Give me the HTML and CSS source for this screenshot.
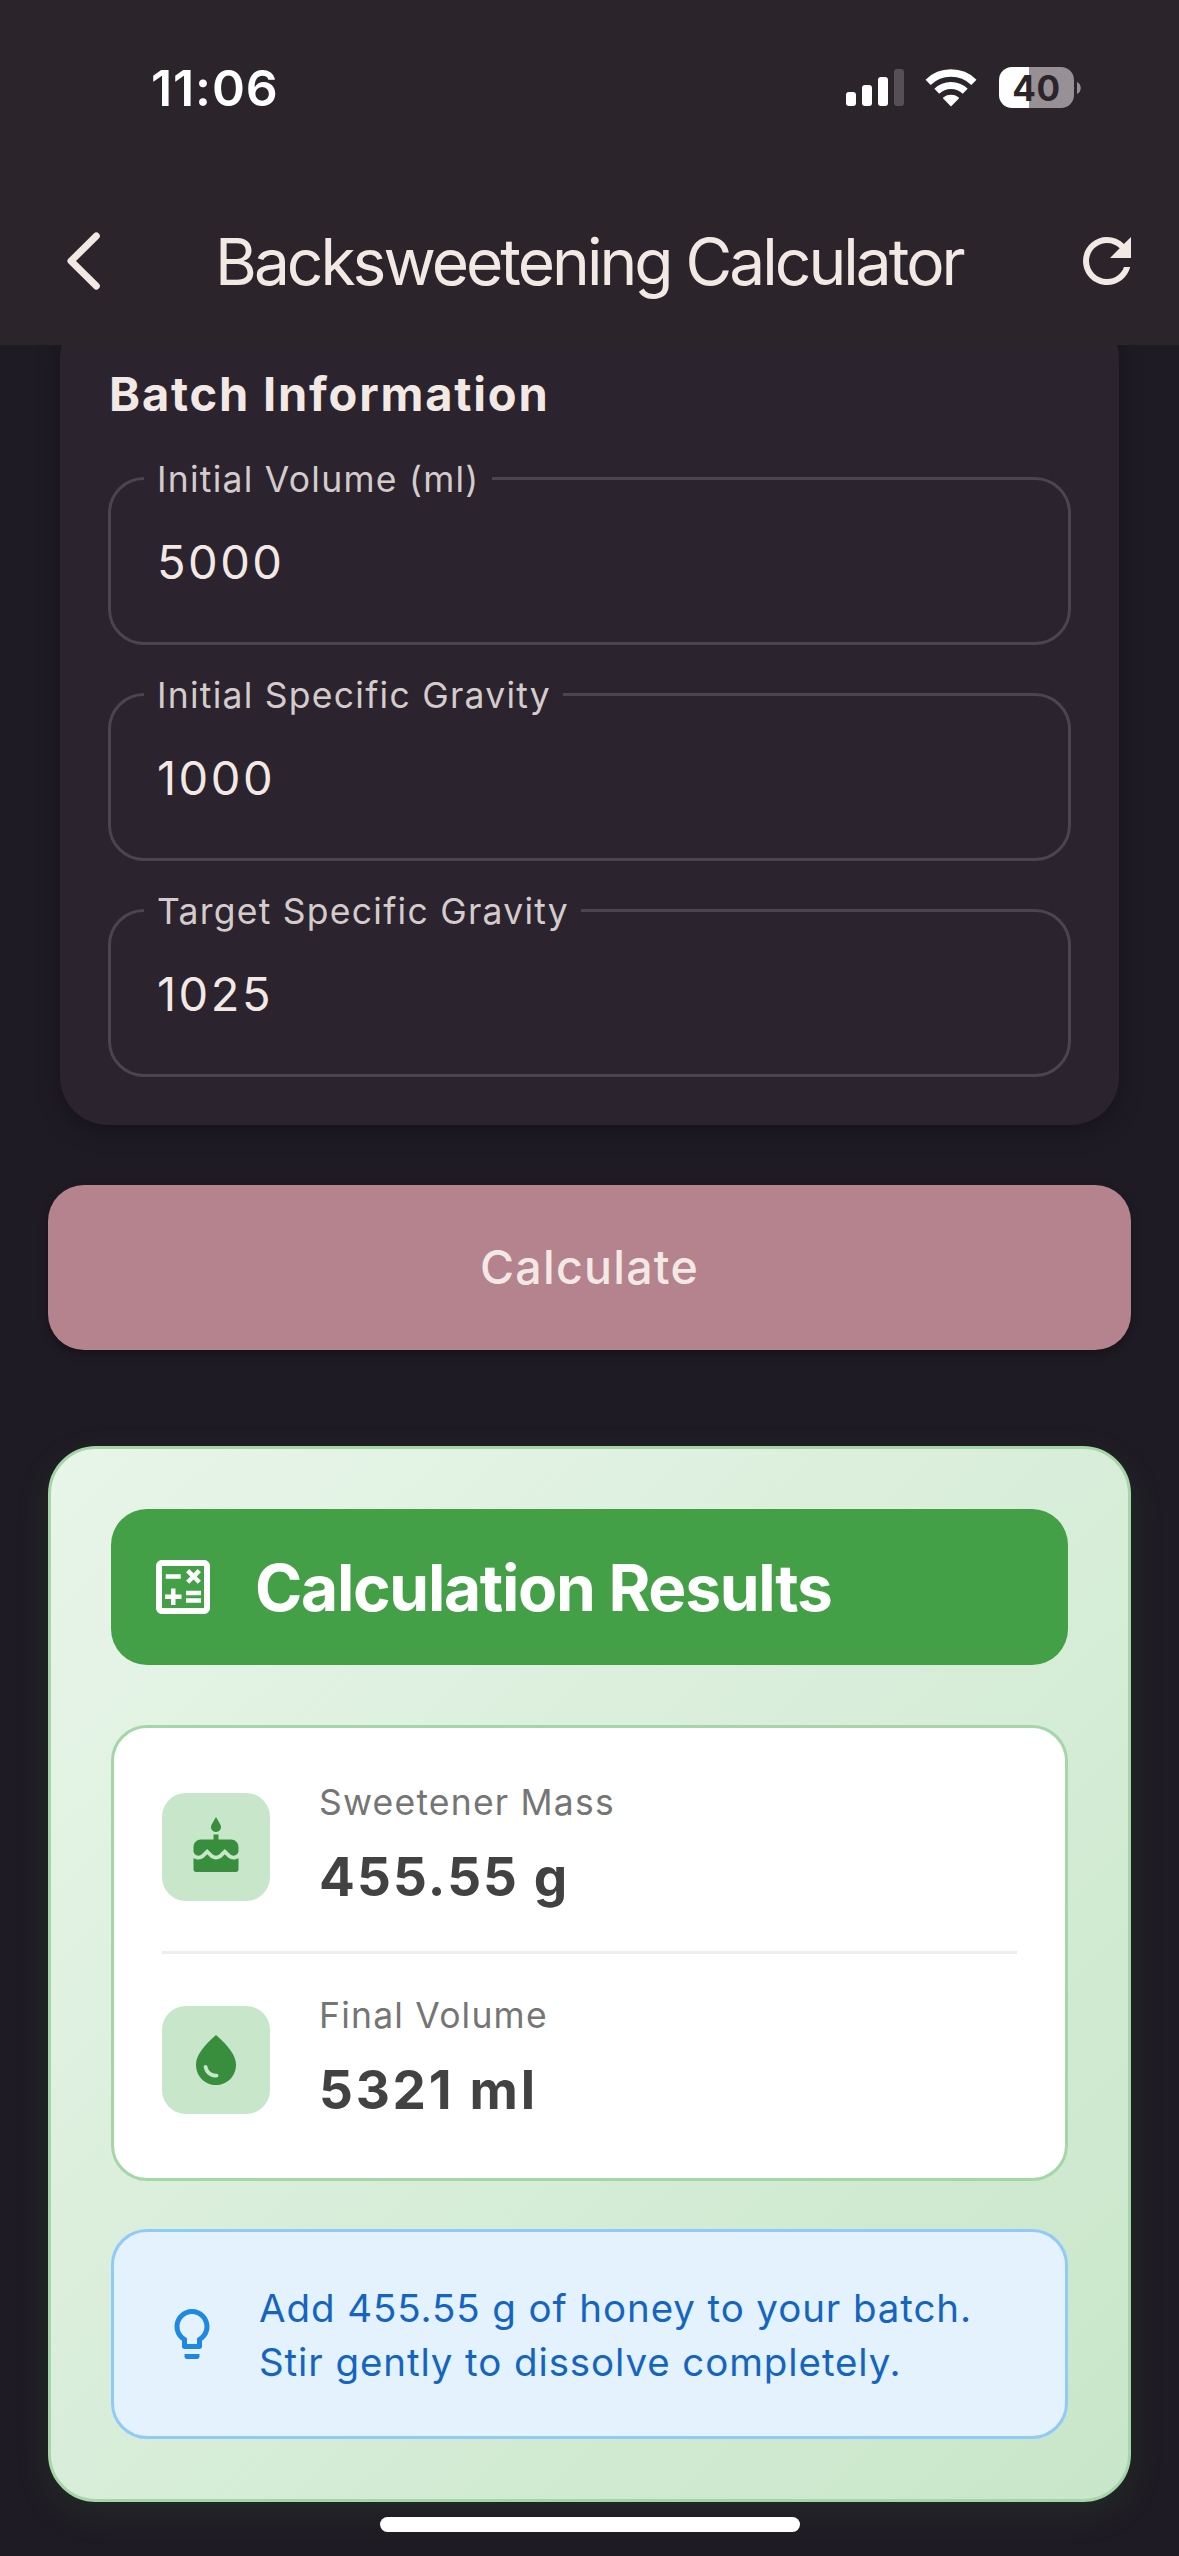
FILE: index.html
```html
<!DOCTYPE html>
<html lang="en">
<head>
<meta charset="utf-8">
<title>Backsweetening Calculator</title>
<link rel="stylesheet" href="styles.css">
</head>
<body>
<header class="top">
  <div class="status">
    <span class="time">11:06</span>
    <div class="indicators">
      <svg class="signal" width="58" height="37" viewBox="0 0 58 37" fill="#fff">
        <rect x="0" y="23" width="10" height="14" rx="3"/>
        <rect x="16" y="16" width="10" height="21" rx="3"/>
        <rect x="32" y="8" width="10" height="29" rx="3"/>
        <rect x="48" y="0" width="10" height="37" rx="3" fill="#565056"/>
      </svg>
      <svg class="wifi" width="52" height="38" viewBox="0 0 52 38" fill="none" stroke="#fff">
        <path d="M3.1 13.3a33 33 0 0 1 45.8 0" stroke-width="7.4"/>
        <path d="M11.8 22.2a20.5 20.5 0 0 1 28.4 0" stroke-width="7"/>
        <path d="M26 37.4l-7.6-7.6a1 1 0 0 1 .1-1.5a12.6 12.6 0 0 1 15 0a1 1 0 0 1 .1 1.5z" fill="#fff" stroke="none"/>
      </svg>
      <div class="battery">40</div>
      <svg class="nub" width="4" height="12" viewBox="0 0 4 12"><path d="M0 0c5 2 5 10 0 12z" fill="#958f95"/></svg>
    </div>
  </div>
  <nav class="appbar">
    <svg width="72" height="72" viewBox="0 0 72 72" fill="none" stroke="#f3e9e4" stroke-width="7" stroke-linecap="round" stroke-linejoin="round"><path d="M48.300 11L23 36l25.300 25"/></svg>
    <h1>Backsweetening Calculator</h1>
    <svg width="72" height="72" viewBox="0 0 24 24" fill="#f3e9e4"><path d="M17.65 6.35A7.958 7.958 0 0 0 12 4c-4.42 0-7.99 3.58-7.99 8s3.57 8 7.99 8c3.73 0 6.84-2.55 7.73-6h-2.08A5.99 5.99 0 0 1 12 18c-3.31 0-6-2.69-6-6s2.69-6 6-6c1.66 0 3.14.69 4.22 1.78L13 11h7V4l-2.35 2.35z"/></svg>
  </nav>
</header>
<main>
  <section class="batch">
    <h2>Batch Information</h2>
    <div class="fields">
      <fieldset><legend>Initial Volume (ml)</legend><div class="value">5000</div></fieldset>
      <fieldset><legend>Initial Specific Gravity</legend><div class="value">1000</div></fieldset>
      <fieldset><legend>Target Specific Gravity</legend><div class="value">1025</div></fieldset>
    </div>
  </section>
  <button class="calculate" type="button">Calculate</button>
  <section class="results">
    <div class="results-head">
      <svg width="72" height="72" viewBox="0 0 24 24" fill="#fff"><path d="M19 3H5c-1.1 0-2 .9-2 2v14c0 1.1.9 2 2 2h14c1.100 0 2-.9 2-2V5c0-1.100-.9-2-2-2zm0 16H5V5h14v14z"/><path d="M6.250 7.720h5v1.500h-5zM13 15.750h5v1.500h-5zM13 13.250h5v1.500h-5zM8 18h1.500v-2h2v-1.500h-2v-2H8v2H6V16h2zM14.090 10.950l1.410-1.410 1.410 1.410 1.060-1.060-1.410-1.420 1.410-1.410L16.910 6 15.500 7.410 14.090 6l-1.060 1.060 1.410 1.410-1.410 1.420z"/></svg>
      <h2>Calculation Results</h2>
    </div>
    <div class="figures">
      <div class="figure">
        <div class="tile"><svg width="60" height="60" viewBox="0 0 24 24" fill="#388e3c"><path d="M12 6c1.110 0 2-.9 2-2 0-.38-.1-.73-.29-1.030L12 0l-1.710 2.970c-.19.3-.29.65-.29 1.030 0 1.100.9 2 2 2zm4.600 9.990l-1.070-1.070-1.080 1.070c-1.300 1.300-3.580 1.310-4.890 0l-1.070-1.070-1.090 1.070C6.750 16.640 5.880 17 4.960 17c-.73 0-1.400-.23-1.960-.61V21c0 .55.45 1 1 1h16c.55 0 1-.45 1-1v-4.610c-.56.38-1.230.61-1.960.61-.92 0-1.790-.36-2.440-1.010zM18 9h-5V7h-2v2H6c-1.660 0-3 1.340-3 3v1.540c0 1.080.88 1.960 1.960 1.960.52 0 1.020-.2 1.380-.57l2.140-2.130 2.130 2.130c.74.74 2.030.74 2.770 0l2.140-2.130 2.130 2.130c.37.37.86.57 1.380.57 1.080 0 1.960-.88 1.960-1.960V12C21 10.340 19.660 9 18 9z"/></svg></div>
        <div class="figure-text"><span class="name">Sweetener Mass</span><span class="amount">455.55 g</span></div>
      </div>
      <hr>
      <div class="figure">
        <div class="tile"><svg width="60" height="60" viewBox="0 0 24 24" fill="#388e3c"><path d="M12 2c-5.330 4.550-8 8.480-8 11.800 0 4.980 3.800 8.200 8 8.200s8-3.220 8-8.200c0-3.320-2.670-7.250-8-11.800zM7.830 14c.37 0 .67.26.74.62.41 2.220 2.280 2.980 3.640 2.870.43-.02.79.32.79.75 0 .4-.32.73-.72.75-2.130.13-4.620-1.090-5.190-4.120C7.010 14.420 7.370 14 7.830 14z"/></svg></div>
        <div class="figure-text"><span class="name">Final Volume</span><span class="amount volume">5321 ml</span></div>
      </div>
    </div>
    <div class="tip">
      <svg width="60" height="60" viewBox="0 0 24 24" fill="#1e88e5"><path d="M9 21c0 .55.45 1 1 1h4c.55 0 1-.45 1-1v-1H9v1zm3-19C8.140 2 5 5.140 5 9c0 2.380 1.190 4.470 3 5.740V17c0 .55.45 1 1 1h6c.55 0 1-.45 1-1v-2.260c1.810-1.270 3-3.360 3-5.740 0-3.860-3.140-7-7-7zm2.850 11.100l-.85.6V16h-4v-2.300l-.85-.6A4.997 4.997 0 0 1 7 9c0-2.760 2.240-5 5-5s5 2.240 5 5c0 1.630-.8 3.160-2.150 4.100z"/></svg>
      <p>Add 455.55 g of honey to your batch. Stir gently to dissolve completely.</p>
    </div>
  </section>
</main>
<div class="home-indicator"></div>
</body>
</html>
```
FILE: styles.css
```css
* { box-sizing: border-box; }
body {
  margin: 0;
  width: 1179px;
  height: 2556px;
  overflow: hidden;
  background: #1f1b24;
  color: #f3e9e4;
  font-family: Inter, "Liberation Sans", sans-serif;
}
h1, h2, p { margin: 0; }
svg { display: block; flex: none; }

.top {
  position: relative;
  z-index: 1;
  height: 345px;
  background: #2b252b;
}
.status {
  display: flex;
  justify-content: space-between;
  height: 177px;
  padding: 58px 98px 0 151px;
}
.time {
  color: #fff;
  font-size: 50px;
  font-weight: 600;
  line-height: 61px;
  letter-spacing: .9px;
}
.indicators {
  display: flex;
  align-items: center;
  height: 59px;
}
.wifi { margin: 0 22px 0 21px; }
.battery {
  width: 75px;
  height: 41px;
  border-radius: 13px;
  background: linear-gradient(90deg, #fff 30px, #979196 30px);
  color: #2b252b;
  font-size: 35px;
  font-weight: 700;
  line-height: 42px;
  letter-spacing: .5px;
  text-align: center;
}
.nub { margin-left: 3px; }
.appbar {
  display: flex;
  align-items: center;
  height: 168px;
  padding: 0 36px 0 48px;
}
.appbar h1 {
  flex: 1;
  margin-left: 95px;
  padding-top: 2px;
  font-size: 64px;
  font-weight: 400;
  line-height: 60px;
  letter-spacing: -2.97px;
  white-space: nowrap;
}

main {
  display: flex;
  flex-direction: column;
  padding: 0 48px;
  margin-top: -35px;
}
.batch {
  margin: 0 12px;
  padding: 48px;
  border-radius: 48px;
  background: #2b232e;
  box-shadow: 0 6px 24px rgba(0, 0, 0, .32);
}
.batch h2 {
  margin: 0 0 31px 1px;
  font-size: 47px;
  font-weight: 700;
  line-height: 71px;
  letter-spacing: 1.8px;
}
.fields { display: flex; flex-direction: column; gap: 31px; }
fieldset {
  min-width: 0;
  height: 185px;
  margin: 0;
  padding: 0 45px 0 33px;
  border: 3px solid #4a4550;
  border-radius: 36px;
}
legend {
  height: 37px;
  padding: 0 12px 0 13px;
  color: #d3cccb;
  font-size: 35.5px;
  line-height: 39px;
  letter-spacing: 1.25px;
}
.value {
  margin: 35px 0 0 13px;
  font-size: 47px;
  line-height: 60px;
  letter-spacing: 2.5px;
}

.calculate {
  height: 165px;
  margin-top: 60px;
  padding: 0 0 2px;
  border: 0;
  border-radius: 36px;
  background: #b5838d;
  box-shadow: 0 4px 8px rgba(0, 0, 0, .35);
  color: #f3e9e4;
  font: 500 46.5px/60px Inter, "Liberation Sans", sans-serif;
  letter-spacing: 1.25px;
}

.results {
  display: flex;
  flex-direction: column;
  margin-top: 96px;
  padding: 60px;
  border: 3px solid #a5d6a7;
  border-radius: 48px;
  background: linear-gradient(to bottom right, #e8f5e9, #c8e6c9);
  box-shadow: 0 12px 36px rgba(76, 175, 80, .1);
}
.results-head {
  display: flex;
  align-items: center;
  gap: 36px;
  height: 156px;
  padding: 0 36px;
  border-radius: 36px;
  background: #43a047;
  color: #fff;
}
.results-head h2 {
  padding-top: 1px;
  font-size: 64px;
  font-weight: 700;
  line-height: 80px;
  letter-spacing: -1.29px;
}
.figures {
  margin-top: 60px;
  padding: 48px;
  border: 3px solid #a5d6a7;
  border-radius: 36px;
  background: #fff;
}
.figure { display: flex; align-items: center; gap: 49px; height: 141px; }
.figure-text { display: flex; flex-direction: column; gap: 8px; }
.tile {
  display: grid;
  place-items: center;
  width: 108px;
  height: 108px;
  border-radius: 24px;
  background: #c8e6c9;
}
.name {
  color: #757575;
  font-size: 35.5px;
  font-weight: 400;
  line-height: 53px;
  letter-spacing: 1.2px;
}
.amount {
  color: #424242;
  font-size: 53px;
  font-weight: 700;
  line-height: 80px;
  letter-spacing: 2.1px;
}
.volume { letter-spacing: 2.75px; }
hr {
  height: 3px;
  margin: 34px 0 35px;
  border: 0;
  background: #eee;
}
.tip {
  display: flex;
  align-items: center;
  gap: 37px;
  height: 210px;
  margin-top: 48px;
  padding: 0 48px;
  border: 3px solid #90caf9;
  border-radius: 36px;
  background: #e3f2fd;
}
.tip p {
  padding-top: 1px;
  color: #1565c0;
  font-size: 38.5px;
  line-height: 54px;
  letter-spacing: .9px;
}

/* System gesture bar, over the scrolling content. */
.home-indicator {
  position: absolute;
  z-index: 2;
  left: 380px;
  top: 2517px;
  width: 420px;
  height: 15px;
  border-radius: 8px;
  background: #fff;
}
```
